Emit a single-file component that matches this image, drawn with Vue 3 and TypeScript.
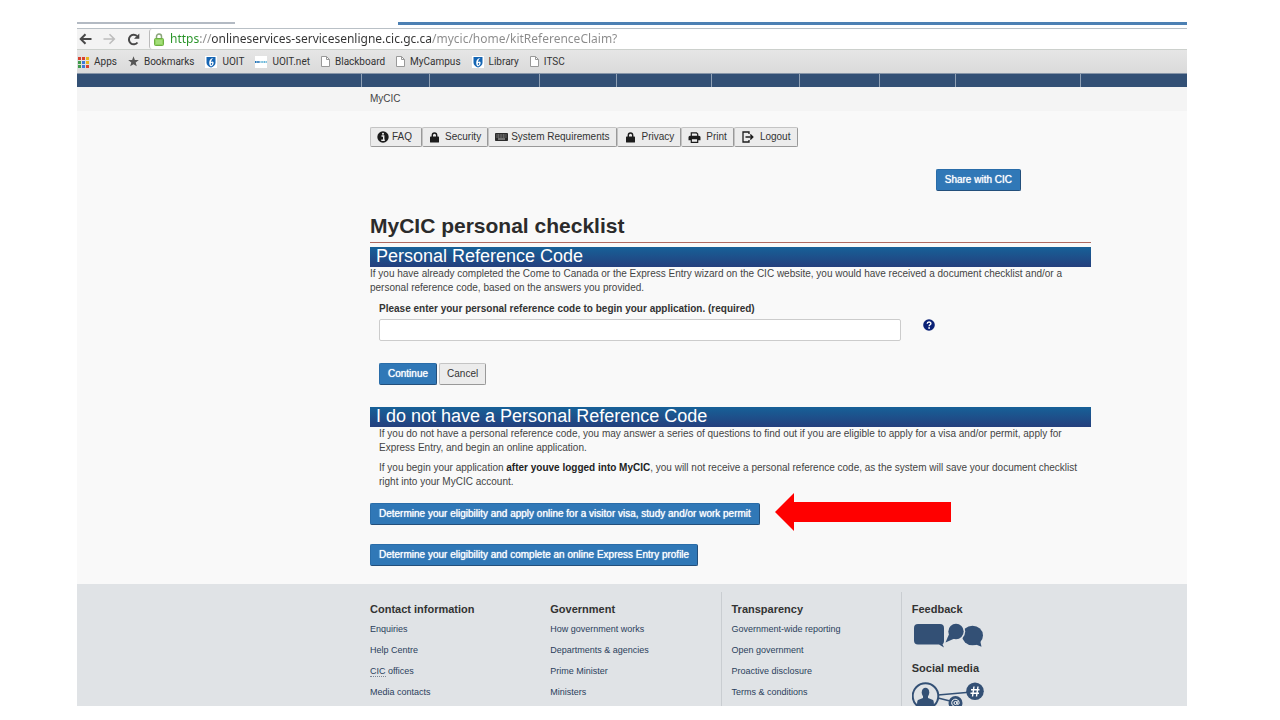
<script setup lang="ts">
import { ref } from 'vue'

const address = ref('https://onlineservices-servicesenligne.cic.gc.ca/mycic/home/kitReferenceClaim?')
const code = ref('')
const bookmarks = [
  { icon: 'apps', label: 'Apps' },
  { icon: 'star', label: 'Bookmarks' },
  { icon: 'shield', label: 'UOIT' },
  { icon: 'wordmark', label: 'UOIT.net' },
  { icon: 'page', label: 'Blackboard' },
  { icon: 'page', label: 'MyCampus' },
  { icon: 'shield', label: 'Library' },
  { icon: 'page', label: 'ITSC' },
]
const appDots = ['#d8412f', '#d8412f', '#e8b520', '#3f9b4b', '#3c78d8', '#e8b520', '#3f9b4b', '#3c78d8', '#d8412f']
const tools = [
  { name: 'faq', icon: 'info', label: 'FAQ' },
  { name: 'security', icon: 'lock', label: 'Security' },
  { name: 'system', icon: 'keyboard', label: 'System Requirements' },
  { name: 'privacy', icon: 'lock', label: 'Privacy' },
  { name: 'print', icon: 'print', label: 'Print' },
  { name: 'logout', icon: 'logout', label: 'Logout' },
]
const columns = [
  { title: 'Contact information', links: ['Enquiries', 'Help Centre', 'CIC offices', 'Media contacts'] },
  { title: 'Government', links: ['How government works', 'Departments & agencies', 'Prime Minister', 'Ministers'] },
  { title: 'Transparency', links: ['Government-wide reporting', 'Open government', 'Proactive disclosure', 'Terms & conditions'] },
]
</script>

<template>
  <div class="slide">
    <div class="browser">
      <div class="tabs"><span class="tab-idle"></span><span class="tab-active"></span></div>
      <div class="toolbar">
        <button class="tool" aria-label="Back">
          <svg width="13" height="12" viewBox="0 0 13 12"><path d="M12.500 6H2M6.500 1.200 1.700 6l4.800 4.800" fill="none" stroke="#484848" stroke-width="2" /></svg>
        </button>
        <button class="tool" aria-label="Forward">
          <svg width="13" height="12" viewBox="0 0 13 12"><path d="M.5 6H11M6.500 1.200 11.300 6 6.500 10.800" fill="none" stroke="#bdbdbd" stroke-width="1.600" /></svg>
        </button>
        <button class="tool" aria-label="Reload">
          <svg width="13" height="13" viewBox="0 0 13 13"><path d="M10.500 9.500A4.800 4.800 0 1 1 10 3" fill="none" stroke="#484848" stroke-width="2" /><path d="M12.300.5v5.300H7z" fill="#484848" /></svg>
        </button>
        <div class="omnibox">
          <svg width="10" height="13" viewBox="0 0 10 13"><path d="M2.500 6V3.500a2.500 2.500 0 0 1 5 0V6" fill="none" stroke="#8aa57a" stroke-width="1.500" /><rect x=".5" y="5.500" width="9" height="7" rx="1" fill="#8fd45e" stroke="#6fae45" /><path d="M2 8h6M2 10h6" stroke="#b7e695" /></svg>
          <input v-model="address" class="url" type="text" aria-label="Address" spellcheck="false" />
        </div>
      </div>
      <nav class="bookmarks" aria-label="Bookmarks">
        <a v-for="b in bookmarks" :key="b.label" href="#">
          <svg v-if="b.icon === 'apps'" width="12" height="12" viewBox="0 0 12 12"><rect v-for="(c, i) in appDots" :key="i" :x="(i % 3) * 4 + 1" :y="Math.floor(i / 3) * 4 + 1" width="3" height="3" :fill="c" /></svg>
          <svg v-else-if="b.icon === 'star'" width="11" height="11" viewBox="0 0 12 12"><path d="m6 .3 1.500 4 4.300.1-3.400 2.700 1.200 4.200L6 8.900l-3.600 2.400 1.200-4.200L.2 4.400l4.300-.1z" fill="#555" /></svg>
          <svg v-else-if="b.icon === 'shield'" width="12" height="12" viewBox="0 0 12 12"><path fill="#fff" d="M0 0h12v12H0z" /><path d="M1.500 1h9v5.500c0 2.500-1.800 4-4.500 5-2.700-1-4.500-2.500-4.500-5z" fill="#1565b3" /><path d="M8.500 2C5.500 2.200 4 4.400 4.300 8c.2 1.300.8 2 1.700 2.500 2-.8 2.700-2.200 2.600-4C8.300 5.200 7 5 6 6.200 6.200 4.500 7 3 8.500 2z" fill="#fff" /><path d="M6 7.200c1.500-.9 1.700.8.300 2.100C5.700 9 5.700 8 6 7.200z" fill="#1565b3" /></svg>
          <svg v-else-if="b.icon === 'wordmark'" width="12" height="12" viewBox="0 0 12 12"><path fill="#fff" d="M0 0h12v12H0z" /><path d="M0 6h5" stroke="#2474b8" stroke-width="2" stroke-dasharray="1.200 .4" /><path d="M5.500 6H12" stroke="#68b6d8" stroke-width="2" stroke-dasharray="1.200 .5" /></svg>
          <svg v-else width="9" height="11" viewBox="0 0 9 11"><path d="M.5.5h5l3 3v7h-8z" fill="#fff" stroke="#999" /><path d="M5.500.5v3h3" fill="none" stroke="#999" /></svg>
          <span>{{ b.label }}</span>
        </a>
      </nav>
      <div class="site-nav"><i v-for="n in 9" :key="n"></i></div>
      <div class="crumbs"><a href="#">MyCIC</a></div>

      <main>
        <div class="tools">
          <button v-for="t in tools" :key="t.name" class="btn" :class="t.name">
            <svg v-if="t.icon === 'info'" width="12" height="12" viewBox="0 0 12 12"><circle cx="6" cy="6" r="5.700" fill="#1c1c1c" /><path d="M4.500 5h2.200v4M4.300 9.200h3.500" fill="none" stroke="#eee" stroke-width="1.400" /><circle cx="6" cy="2.800" r="1" fill="#eee" /></svg>
            <svg v-else-if="t.icon === 'lock'" width="9" height="11" viewBox="0 0 9 11"><path d="M2.300 5V3.200a2.200 2.200 0 0 1 4.400 0V5" fill="none" stroke="#1c1c1c" stroke-width="1.400" /><rect y="4.600" width="9" height="6" rx=".7" fill="#1c1c1c" /></svg>
            <svg v-else-if="t.icon === 'keyboard'" width="13" height="8" viewBox="0 0 13 8"><rect width="13" height="8" rx=".8" fill="#2b2b2b" /><path d="M1.500 2h10M1.500 4h10" stroke="#bbb" stroke-width=".9" stroke-dasharray="1 .6" /><path d="M3 6h7" stroke="#ccc" stroke-width=".9" /></svg>
            <svg v-else-if="t.icon === 'print'" width="13" height="11" viewBox="0 0 13 11"><path d="M3.300 4V.9h5.200l1.200 1.200V4" fill="#eee" stroke="#1c1c1c" stroke-width="1.200" /><path d="M2 3.700h9a1.500 1.500 0 0 1 1.500 1.500v3.100H.5V5.200A1.500 1.500 0 0 1 2 3.700z" fill="#1c1c1c" /><path d="M3.300 6.700h6.400v3.600H3.300z" fill="#eee" stroke="#1c1c1c" stroke-width="1.200" /></svg>
            <svg v-else width="12" height="12" viewBox="0 0 12 12"><path d="M7 3V1H1v10h6V9" fill="none" stroke="#1c1c1c" stroke-width="1.300" /><path d="M3.500 6h7M8.300 3.500 10.800 6 8.300 8.500" fill="none" stroke="#1c1c1c" stroke-width="1.400" /></svg>
            <span>{{ t.label }}</span>
          </button>
        </div>
        <div class="share"><button class="btn primary">Share with CIC</button></div>
        <h1>MyCIC personal checklist</h1>

        <section>
          <h2>Personal Reference Code</h2>
          <p>If you have already completed the Come to Canada or the Express Entry wizard on the CIC website, you would have received a document checklist and/or a personal reference code, based on the answers you provided.</p>
          <form @submit.prevent>
            <label for="code">Please enter your personal reference code to begin your application. (required)</label>
            <div class="field">
              <input id="code" v-model="code" type="text" />
              <button type="button" class="help" aria-label="Help">
                <svg width="12" height="12" viewBox="0 0 12 12"><circle cx="6" cy="6" r="5.800" fill="#0b2277" /><path d="M4.200 4.700C4.200 2.500 7.900 2.500 7.900 4.500 7.900 5.800 6.100 5.700 6.100 7.300" fill="none" stroke="#fff" stroke-width="1.400" /><circle cx="6.100" cy="9" r=".9" fill="#fff" /></svg>
              </button>
            </div>
            <div class="actions">
              <button class="btn primary">Continue</button>
              <button type="button" class="btn">Cancel</button>
            </div>
          </form>
        </section>

        <section>
          <h2>I do not have a Personal Reference Code</h2>
          <div class="copy">
            <p>If you do not have a personal reference code, you may answer a series of questions to find out if you are eligible to apply for a visa and/or permit, apply for Express Entry, and begin an online application.</p>
            <p>If you begin your application <b>after youve logged into MyCIC</b>, you will not receive a personal reference code, as the system will save your document checklist right into your MyCIC account.</p>
          </div>
          <div class="choices">
            <div class="choice">
              <button class="btn primary">Determine your eligibility and apply online for a visitor visa, study and/or work permit</button>
              <svg class="arrow" width="176" height="38" viewBox="0 0 176 38"><path d="M0 19 19 0v9h157v20H19v9z" fill="#f00" /></svg>
            </div>
            <div class="choice"><button class="btn primary">Determine your eligibility and complete an online Express Entry profile</button></div>
          </div>
        </section>
      </main>

      <footer>
        <div v-for="c in columns" :key="c.title" class="col">
          <h3>{{ c.title }}</h3>
          <ul>
            <li v-for="l in c.links" :key="l">
              <a v-if="l === 'CIC offices'" href="#"><abbr>CIC</abbr> offices</a>
              <a v-else href="#">{{ l }}</a>
            </li>
          </ul>
        </div>
        <div class="col">
          <h3>Feedback</h3>
          <a class="pic" href="#" aria-label="Feedback">
            <svg width="72" height="26" viewBox="0 0 72 26" fill="#335075"><path d="M5 1h22a4 4 0 0 1 4 4v13c0 2-1 3-1.500 3.200l1.500 3.300-5-3H5a4 4 0 0 1-4-4V5a4 4 0 0 1 4-4z" /><ellipse cx="59.500" cy="12.500" rx="10.500" ry="9.800" /><path d="m67 17 1.500 6.800-7.500-3z" /><circle cx="43" cy="8.500" r="9.200" fill="#e0e3e6" /><circle cx="43" cy="8.500" r="7.700" /><path d="m36.500 10-4 9.500 9-4z" /></svg>
          </a>
          <h3>Social media</h3>
          <a class="pic social" href="#" aria-label="Social media">
            <svg width="74" height="24" viewBox="0 0 74 24"><path d="m26 13 34-3M26 16l20 5" stroke="#335075" stroke-width="1.500" /><circle cx="13.500" cy="14" r="12.800" fill="#e0e3e6" stroke="#335075" stroke-width="2" /><ellipse cx="13.500" cy="10.500" rx="3.800" ry="4.800" fill="#335075" /><path d="M11 12h5v4l5 2c1 1 1 4 1 8-4 3-13 3-17 0 0-4 0-7 1-8l5-2z" fill="#335075" /><circle cx="63" cy="9.300" r="8.800" fill="#335075" /><circle cx="43.500" cy="21" r="7" fill="#335075" /><path d="m62 4.500-1.500 10M66 4.500l-1.500 10M59 7.800h8.500M58.500 11.200H67" stroke="#fff" stroke-width="1.400" /><circle cx="43.500" cy="21" r="1.500" fill="none" stroke="#fff" /><path d="M45.100 19v3c.5 1 2.200.5 2-1.500a3.700 3.700 0 1 0-2 3.700" fill="none" stroke="#fff" /></svg>
          </a>
        </div>
      </footer>
    </div>
  </div>
</template>

<style>
body { margin: 0; background: #fff; }
</style>

<style scoped>
* { box-sizing: border-box; }
.slide { height: 100vh; padding: 22px 93px 14px 77px; font: 10px/14px "Liberation Sans", Arial, sans-serif; color: #444; }
.browser { height: 100%; overflow: hidden; background: #f9f9f9; display: flex; flex-direction: column; }
.browser > * { flex-shrink: 0; }
button, input { font: inherit; color: inherit; margin: 0; }
a { color: inherit; text-decoration: none; }
svg { display: block; flex: none; }

.tabs { display: flex; gap: 163px; height: 6px; background: #fff; }
.tab-idle { width: 158px; height: 2px; background: #b3bac3; }
.tab-active { flex: 1; height: 3px; background: #4c80b3; }
.toolbar { display: flex; height: 21px; background: #f3f3f3; border-top: 1px solid #b9c0c6; }
.tool { border: 0; background: none; padding: 0 0 0 2px; display: flex; align-items: center; width: 24px; }
.omnibox { flex: 1; display: flex; align-items: center; gap: 6px; background: #fff; border-left: 1px solid #bbb; border-radius: 3px 0 0 3px; padding-left: 4px; }
.url { flex: 1; min-width: 0; height: 20px; border: 0; padding: 0; font: 12px/20px "Noto Sans", "Open Sans", sans-serif; color: transparent; caret-color: #333; background: linear-gradient(90deg, #279327 29px, #8a8a8a 29px 42px, #333 42px 262px, #8a8a8a 262px); background-clip: text; -webkit-background-clip: text; outline: 0; }
.bookmarks { display: flex; align-items: center; height: 24px; background: linear-gradient(#e6e6e6, #dadada); border-top: 1px solid #ccd0cc; color: #333; gap: 11px; font-family: Roboto, "Open Sans", sans-serif; }
.bookmarks a { display: flex; align-items: center; gap: 5px; }
.site-nav { display: grid; grid-template-columns: 285px 68px 110px 77px 95px 88px 80px 76px 125px; height: 14px; background: #335075; border-top: 1px solid #8795a8; }
.site-nav i { border-right: 1px solid #8fa0b5; }
.crumbs { height: 24px; background: #f4f4f4; padding: 5px 96px 0 293px; }

main { padding: 16px 96px 18px 293px; }
.btn { border: 1px solid #c4c4c4; border-right-color: #999; border-bottom-color: #999; border-radius: 2px; background: #ececec; color: #333; height: 22px; padding: 0 7px; white-space: nowrap; line-height: 14px; }
.primary { padding: 0 8px; background: #3078b7; border-color: #2a6da9 #234f7b #234f7b #2a6da9; color: #fff; text-shadow: 0 0 1px #fff; }
.tools { display: flex; }
.tools .btn { height: 20px; padding: 0 6px; display: flex; align-items: center; }
.tools .faq { gap: 3px; padding: 0 9px 0 6px; }
.tools .security { gap: 6px; padding: 0 6px 0 7px; }
.tools .system { gap: 3px; }
.tools .privacy { gap: 7px; padding: 0 6px 0 8px; }
.tools .print { gap: 5px; }
.tools .logout { gap: 6px; padding: 0 7px; }
.share { display: flex; justify-content: flex-end; padding: 22px 70px 0 0; }
h1 { margin: 21px 0 4px; padding-bottom: 2px; font-size: 21px; line-height: 28px; color: #2b2b2b; border-bottom: 1px solid #af6a60; }
h2 { margin: 0; padding: 0 0 1px 6px; font-size: 18px; line-height: 19px; font-weight: normal; color: #fff; background: linear-gradient(#176198, #243f7d); }
p { margin: 0; }
form { padding: 7px 0 22px 9px; }
form label { font-weight: bold; color: #333; display: block; }
.field { display: flex; gap: 22px; margin-top: 3px; }
.field input { width: 522px; height: 22px; border: 1px solid #ccc; border-radius: 2px; background: #fff; padding: 0 6px; }
.help { border: 0; background: none; padding: 0; height: 12px; }
.actions { display: flex; gap: 2px; margin-top: 22px; }
.copy { padding-left: 9px; display: grid; gap: 6px; }
.copy b { color: #222; }
.choices { display: grid; gap: 19px; margin-top: 14px; }
.choice { display: flex; gap: 15px; align-items: center; height: 22px; }
.arrow { margin-top: -4px; }

footer { flex: 1 0 auto; background: #e0e3e6; padding: 8px 96px 0 293px; display: grid; grid-template-columns: repeat(4, 1fr); }
.col { padding-top: 9px; }
.col:nth-child(n + 3) { margin-left: -10px; padding-left: 10px; border-left: 1px solid #c9cdd1; }
h3 { margin: 0; font-size: 11px; line-height: 16px; color: #333; }
ul { list-style: none; margin: 2px 0 0; padding: 0; font-size: 9px; line-height: 21px; color: #2b3f5c; }
abbr { border-bottom: 1px dotted #7b8796; }
.pic { display: block; margin: 6px 0 11px 1px; }
.pic.social { margin: 6px 0 0; }
</style>
